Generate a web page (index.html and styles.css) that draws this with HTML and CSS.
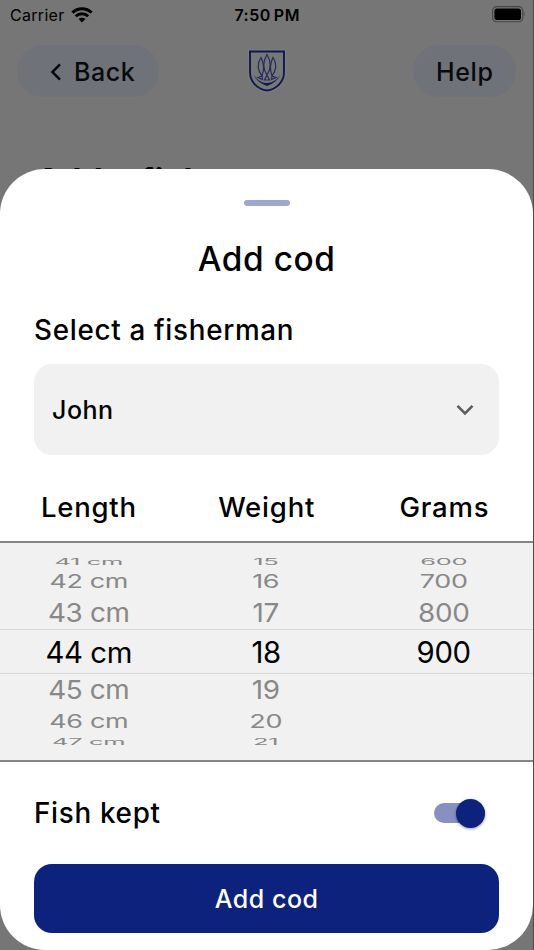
FILE: index.html
```
<!DOCTYPE html>
<html lang="en">
<head>
    <meta charset="UTF-8">
    <meta name="viewport" content="width=device-width, initial-scale=1.0">
    <title>Add cod</title>
    <link rel="stylesheet" href="styles.css">
</head>
<body>
    <div class="screen">
        <div class="status-bar">
            <div class="carrier">
                <span>Carrier</span>
                <svg class="wifi" width="22" height="16" viewBox="0 0 22 16">
                    <path d="M1.4 5.6a13.6 13.6 0 0 1 19.2 0M4.8 9.2a8.8 8.8 0 0 1 12.4 0" fill="none" stroke="#000" stroke-width="3"/>
                    <path d="M7.6 12.1a4.9 4.9 0 0 1 6.8 0L11 15.6z"/>
                </svg>
            </div>
            <div class="time">7:50 PM</div>
            <div class="battery">
                <svg width="34" height="17" viewBox="0 0 34 17">
                    <rect x=".6" y=".6" width="30.2" height="15.2" rx="4.2" fill="none" stroke="#444" stroke-width="1.1"/>
                    <rect x="2.4" y="2.4" width="26.6" height="11.6" rx="2.6"/>
                    <path d="M32.2 5.8q1.6 2.4 0 4.8z" fill="#444"/>
                </svg>
            </div>
        </div>

        <div class="header">
            <div class="pill back">
                <svg width="12" height="18" viewBox="0 0 12 18">
                    <path d="M10 1.4L2.4 9L10 16.6" fill="none" stroke="#08090b" stroke-width="2.5"/>
                </svg>
                <span>Back</span>
            </div>
            <svg class="logo" width="40" height="46" viewBox="0 0 40 46">
                <path d="M1 1.5h38v23c0 10-8 19-19 20.500c-11-1.500-19-10.500-19-20.500z" fill="#7b7e88"/>
                <path d="M3 3.500h34v21c0 9-7 16.500-17 18c-10-1.500-17-9-17-18z" fill="#767779" stroke="#12184a" stroke-width="1.900"/>
                <path d="M6.500 27q6 8 13.500 8t13.500-8q-4 7.500-13.500 11q-9.500-3.500-13.500-11z" fill="#12184a"/>
                <g fill="none" stroke="#252b5a" stroke-width="1.200">
                    <path d="M20 6.500q-6.500 11 0 20.500q6.500-9.500 0-20.500zM20 27l-2.500 5h5z"/>
                    <path d="M14 9.500q-6 9 1 18.500q3.500-9.500-1-18.500zM15 28l-4 1.500l4.500 2z"/>
                    <path d="M26 9.500q6 9-1 18.500q-3.500-9.500 1-18.500zM25 28l4 1.500l-4.500 2z"/>
                </g>
            </svg>
            <div class="pill help">Help</div>
        </div>

        <div class="page-title">Add a fish</div>

        <div class="sheet">
            <div class="handle"></div>
            <h1>Add cod</h1>
            <h2 class="label">Select a fisherman</h2>
            <div class="select">
                <span>John</span>
                <svg width="18" height="12" viewBox="0 0 18 12">
                    <path d="M1.500 1.800L9 9.300L16.500 1.800" fill="none" stroke="#5c5c5c" stroke-width="2.600"/>
                </svg>
            </div>

            <div class="picker-head">
                <span>Length</span>
                <span>Weight</span>
                <span>Grams</span>
            </div>
            <div class="picker">
                <div class="row far"><span>41 cm</span><span>15</span><span>600</span></div>
                <div class="row mid"><span>42 cm</span><span>16</span><span>700</span></div>
                <div class="row near"><span>43 cm</span><span>17</span><span>800</span></div>
                <div class="row selected"><span>44 cm</span><span>18</span><span>900</span></div>
                <div class="row near"><span>45 cm</span><span>19</span><span></span></div>
                <div class="row mid"><span>46 cm</span><span>20</span><span></span></div>
                <div class="row far"><span>47 cm</span><span>21</span><span></span></div>
            </div>

            <div class="kept">
                <h2>Fish kept</h2>
                <div class="switch"><div class="thumb"></div></div>
            </div>
            <div class="submit">Add cod</div>
        </div>
    </div>
</body>
</html>
```
FILE: styles.css
```
* {
    box-sizing: border-box;
}

body {
    margin: 0;
    background-color: #4c4c4c;
    font-family: Inter, "Liberation Sans", sans-serif;
    font-weight: 550;
    color: #000;
}

.screen {
    width: 533.3px;
    height: 950px;
    background-color: #767676;
    display: flex;
    flex-direction: column;
    overflow: hidden;
}

.status-bar {
    height: 30px;
    display: grid;
    grid-template-columns: 1fr auto 1fr;
    align-items: center;
    padding: 0 9px 0 10px;
    font-size: 16px;
    flex-shrink: 0;
}

.carrier {
    display: flex;
    align-items: center;
    gap: 7px;
    font-weight: 400;
    letter-spacing: 0.3px;
}

.wifi {
    margin-left: -1px;
}

.time {
    font-weight: 600;
    letter-spacing: 0.5px;
    word-spacing: -1.5px;
}

.battery {
    display: flex;
    justify-content: flex-end;
    margin: -2px -2px 0 0;
}

.header {
    display: grid;
    grid-template-columns: 1fr auto 1fr;
    height: 52px;
    margin: 15px 17px 0;
    flex-shrink: 0;
}

.pill {
    display: flex;
    align-items: center;
    height: 52px;
    border-radius: 26px;
    background-color: #70727a;
    font-size: 25px;
    letter-spacing: 0.6px;
    color: #08090b;
}

.back {
    width: 142px;
    padding: 1px 0 0 33px;
    gap: 12px;
}

.logo {
    margin-top: 3px;
}

.help {
    width: 103px;
    padding-top: 1px;
    justify-content: center;
    justify-self: end;
}

.page-title {
    margin: 63px 0 -31px 36px;
    height: 40px;
    line-height: 40px;
    font-size: 33px;
    font-weight: 700;
    letter-spacing: 0.7px;
    flex-shrink: 0;
}

.sheet {
    position: relative;
    height: 781px;
    flex-shrink: 0;
    border-radius: 45px;
    background-color: #fff;
    display: flex;
    flex-direction: column;
}

.handle {
    width: 46px;
    height: 6px;
    border-radius: 3px;
    background-color: #a0a6cc;
    margin: 31px auto 0;
}

h1, h2 {
    margin: 0;
    font-weight: 550;
}

h1 {
    margin-top: 32px;
    line-height: 42px;
    font-size: 33.400px;
    letter-spacing: 0.6px;
    text-align: center;
}

h2 {
    font-size: 27.800px;
    line-height: 36px;
    letter-spacing: 0.7px;
}

.label {
    margin: 32px 0 0 34px;
}

.select {
    height: 91px;
    margin: 16px 34px 0;
    padding: 0 25px 0 18px;
    border-radius: 18px;
    background-color: #f1f1f1;
    display: flex;
    align-items: center;
    justify-content: space-between;
    font-size: 25px;
    letter-spacing: 0.5px;
}

.picker-head {
    display: grid;
    grid-template-columns: repeat(3, 1fr);
    margin-top: 34px;
    line-height: 36px;
    font-size: 27.500px;
    letter-spacing: 0.8px;
    text-align: center;
}

.picker {
    height: 221px;
    margin-top: 16px;
    padding-top: 14px;
    border-top: 2px solid #858585;
    border-bottom: 2px solid #858585;
    background-color: #f1f1f1;
    font-size: 29.300px;
    font-weight: 400;
    letter-spacing: -0.4px;
}

.row {
    display: grid;
    grid-template-columns: repeat(3, 1fr);
    align-items: center;
    padding-right: 1px;
    text-align: center;
    color: #888;
}

.row span {
    line-height: 0;
}

.selected {
    height: 45px;
    padding-top: 2px;
    border-top: 1px solid #d9d9d9;
    border-bottom: 1px solid #d9d9d9;
    color: #000;
}

.near {
    height: 32px;
}

.near span {
    transform: scale(0.95, 0.89);
}

.mid {
    height: 31px;
}

.mid span {
    transform: scale(0.92, 0.64);
}

.far {
    height: 9px;
}

.far span {
    transform: scale(0.87, 0.31);
}

.kept {
    display: flex;
    align-items: center;
    justify-content: space-between;
    height: 36px;
    margin: 33px 48px 0 34px;
}

.switch {
    width: 51px;
    height: 20px;
    border-radius: 10px;
    background-color: #8790c0;
    display: flex;
    align-items: center;
    justify-content: flex-end;
}

.thumb {
    width: 29px;
    height: 29px;
    border-radius: 50%;
    background-color: #0d227c;
    box-shadow: 0 1px 3px rgba(0, 0, 0, 0.4);
}

.submit {
    height: 69px;
    margin: 33px 34px 0;
    border-radius: 18px;
    background-color: #0d227c;
    color: #fff;
    font-size: 25px;
    letter-spacing: 0.5px;
    display: flex;
    align-items: center;
    justify-content: center;
}
```
